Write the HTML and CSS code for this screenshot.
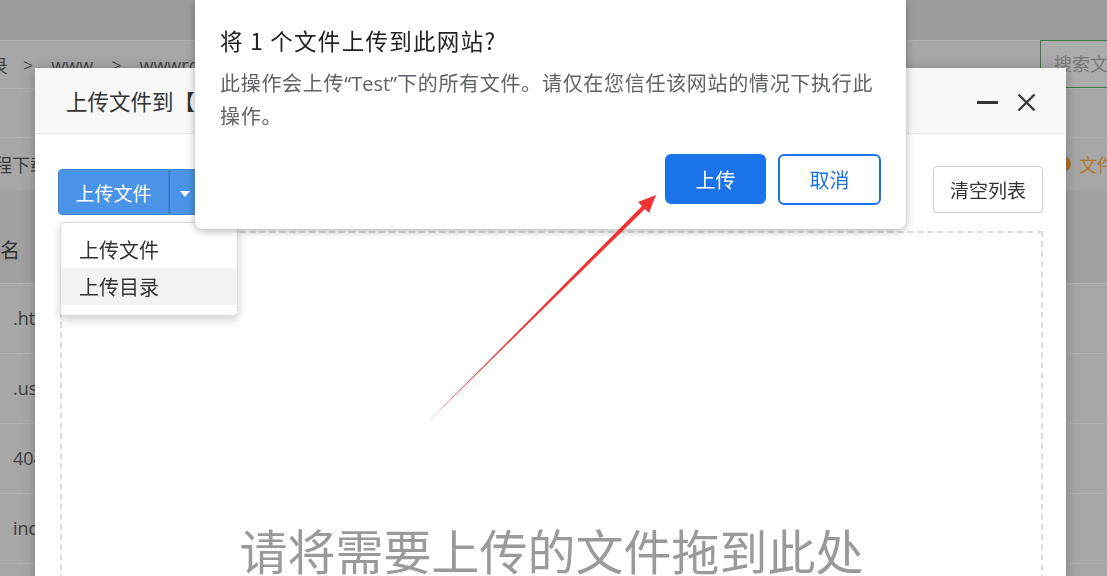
FILE: index.html
```html
<!DOCTYPE html>
<html lang="zh-CN">
<head>
    <meta charset="UTF-8">
    <meta name="viewport" content="width=device-width, initial-scale=1.0">
    <title>上传文件</title>
    <link rel="stylesheet" href="styles.css">
</head>
<body>
    <!-- file manager behind the shade -->
    <div class="page">
        <div class="topbar"></div>
        <div class="crumbs">
            <span class="crumb-cut">录</span>
            <span class="sep">&gt;</span>
            <span>www</span>
            <span class="sep">&gt;</span>
            <span>wwwroot</span>
            <div class="search">搜索文件</div>
        </div>
        <div class="band"></div>
        <div class="tools">
            <span class="tool-cut">远程下载</span>
            <span class="tip"><i class="tip-icon">!</i>文件</span>
        </div>
        <div class="thead"><span>名</span></div>
        <div class="row"><span>.htaccess</span></div>
        <div class="row"><span>.user.ini</span></div>
        <div class="row"><span>404.html</span></div>
        <div class="row"><span>index.html</span></div>
    </div>

    <!-- upload layer -->
    <div class="layer">
        <div class="layer-head">
            <span class="layer-title">上传文件到【/www/wwwroot/Test】</span>
            <div class="layer-ctrl">
                <span class="ctrl-min"></span>
                <svg class="ctrl-close" width="19" height="19" viewBox="0 0 19 19">
                    <path d="M1.5 1.5L17.5 17.5M17.5 1.5L1.5 17.5" stroke="#3c3c3c" stroke-width="2.4" fill="none"/>
                </svg>
            </div>
        </div>
        <div class="layer-body">
            <div class="upload-bar">
                <div class="btn-group">
                    <button class="btn-main">上传文件</button>
                    <button class="btn-caret"><span class="caret"></span></button>
                    <ul class="dropdown-menu">
                        <li>上传文件</li>
                        <li class="active">上传目录</li>
                    </ul>
                </div>
                <button class="btn-clear">清空列表</button>
            </div>
            <div class="dropzone">请将需要上传的文件拖到此处</div>
        </div>
    </div>

    <!-- browser confirm -->
    <div class="confirm">
        <div class="confirm-title">将 1 个文件上传到此网站?</div>
        <div class="confirm-text">此操作会上传<span class="latin">“Test”</span>下的所有文件。请仅在您信任该网站的情况下执行此<br>操作。</div>
        <div class="confirm-actions">
            <button class="btn-ok">上传</button>
            <button class="btn-cancel">取消</button>
        </div>
    </div>

    <svg class="arrow" width="1107" height="576" viewBox="0 0 1107 576">
        <polygon points="427,423 646.5,207.5 643.5,204.5" fill="#ef3333"/>
        <polygon points="656,195 649,213 638,202" fill="#ef3333"/>
    </svg>
</body>
</html>
```

FILE: styles.css
```css
body {
    margin: 0;
    width: 1107px;
    height: 576px;
    overflow: hidden;
    font-family: "Noto Sans CJK SC", "Noto Sans", sans-serif;
    background-color: #a7a7a7;
    color: #3c3c3c;
}
button {
    font-family: inherit;
    cursor: pointer;
}
.page {
    width: 1107px;
    overflow: hidden;
}
.topbar {
    height: 40px;
    background-color: #9c9c9c;
    border-bottom: 1px solid #b1b1b1;
}
.crumbs {
    display: flex;
    align-items: center;
    gap: 18px;
    height: 47px;
    font-size: 18px;
    font-family: "Open Sans", "Noto Sans CJK SC", sans-serif;
    color: #454545;
    border-bottom: 1px solid #b0b0b0;
}
.crumb-cut {
    margin-left: -10px;
    margin-right: -3px;
}
.sep {
    color: #4a4a4a;
}
.search {
    flex-shrink: 0;
    margin-left: auto;
    margin-right: -53px;
    width: 120px;
    height: 48px;
    box-sizing: border-box;
    border: 1px solid #3b7d42;
    background-color: #acacac;
    color: #7a7a7a;
    font-family: "Noto Sans CJK SC", sans-serif;
    font-size: 18px;
    line-height: 44px;
    padding-left: 13px;
    margin-top: -1px;
}
.band {
    height: 48px;
    border-bottom: 1px solid #b0b0b0;
}
.tools {
    display: flex;
    align-items: center;
    height: 52px;
    font-size: 18px;
}
.tool-cut {
    margin-left: -24px;
}
.tip {
    margin-left: auto;
    margin-right: -24px;
    display: flex;
    align-items: center;
    gap: 8px;
    color: #b5772c;
    width: 76px;
}
.tip-icon {
    display: inline-block;
    width: 16px;
    height: 16px;
    border-radius: 50%;
    background-color: #b0702a;
    color: #a7a7a7;
    font-size: 11px;
    font-style: normal;
    font-weight: bold;
    text-align: center;
    line-height: 16px;
}
.thead {
    height: 94px;
    box-sizing: border-box;
    padding-top: 44px;
    line-height: 32px;
    font-size: 20px;
    background-color: #a0a0a0;
    border-bottom: 1px solid #b2b2b2;
    color: #333;
}
.row {
    height: 70px;
    box-sizing: border-box;
    line-height: 69px;
    padding-left: 13px;
    font-size: 18px;
    font-family: "Open Sans", sans-serif;
    border-bottom: 1px solid #b2b2b2;
    color: #3e3e3e;
}

/* upload layer */
.layer {
    position: fixed;
    left: 35px;
    top: 68px;
    width: 1031px;
    height: 560px;
    background-color: #fff;
    box-shadow: 0 1px 12px rgba(0, 0, 0, 0.25);
}
.layer-head {
    display: flex;
    justify-content: space-between;
    align-items: center;
    height: 65px;
    padding: 0 30px 0 31px;
    background-color: #f8f8f8;
    border-bottom: 1px solid #e9e9e9;
}
.layer-title {
    font-size: 21.5px;
    color: #333;
    white-space: nowrap;
}
.layer-ctrl {
    display: flex;
    align-items: center;
    gap: 19px;
    margin-top: 3px;
}
.ctrl-min {
    display: block;
    width: 21px;
    height: 3px;
    background-color: #333;
}
.layer-body {
    padding: 35px 23px 0 23px;
}
.upload-bar {
    display: flex;
    justify-content: space-between;
    align-items: flex-start;
}
.btn-group {
    position: relative;
    display: flex;
}
.btn-main {
    width: 111px;
    height: 46px;
    border: 1px solid #3f86d8;
    border-radius: 4px 0 0 4px;
    background-color: #4a93e6;
    color: #fff;
    font-size: 19px;
    padding: 0;
}
.btn-caret {
    width: 32px;
    height: 46px;
    border: 1px solid #3f86d8;
    border-left-color: #3674c0;
    border-radius: 0 4px 4px 0;
    background-color: #4a93e6;
    padding: 0;
}
.caret {
    display: inline-block;
    border-top: 6px solid #fff;
    border-left: 5px solid transparent;
    border-right: 5px solid transparent;
    vertical-align: middle;
}
.dropdown-menu {
    position: absolute;
    top: 53px;
    left: 2px;
    width: 178px;
    margin: 0;
    padding: 8px 0 10px;
    list-style: none;
    background-color: #fff;
    border: 1px solid #ddd;
    border-radius: 4px;
    box-shadow: 0 4px 10px rgba(0, 0, 0, 0.18);
    box-sizing: border-box;
    z-index: 2;
}
.dropdown-menu li {
    height: 37px;
    line-height: 37px;
    padding-left: 18px;
    font-size: 20px;
    color: #333;
}
.dropdown-menu li.active {
    background-color: #f2f2f2;
}
.btn-clear {
    margin-top: -3px;
    width: 110px;
    height: 47px;
    border: 1px solid #ccc;
    border-radius: 4px;
    background-color: #fff;
    color: #333;
    font-size: 19px;
    padding: 0;
}
.dropzone {
    margin: 16px 0 0 2px;
    width: 983px;
    height: 400px;
    box-sizing: border-box;
    border: 2px dashed #ddd;
    padding-top: 286px;
    text-align: center;
    font-size: 48px;
    line-height: 60px;
    color: #9a9a9a;
}

/* browser confirm dialog */
.confirm {
    position: absolute;
    left: 195px;
    top: 0;
    width: 711px;
    height: 229px;
    box-sizing: border-box;
    padding: 26px 25px;
    background-color: #fff;
    border-radius: 0 0 8px 8px;
    box-shadow: 0 2px 8px rgba(0, 0, 0, 0.3);
    z-index: 3;
}
.confirm-title {
    font-size: 22.5px;
    letter-spacing: 1.3px;
    line-height: 28px;
    color: #202124;
}
.confirm-text {
    margin-top: 13px;
    font-size: 20px;
    letter-spacing: 0.7px;
    line-height: 32px;
    color: #5f6368;
    white-space: nowrap;
}
.latin {
    font-family: "Open Sans", sans-serif;
    letter-spacing: 0;
}
.confirm-actions {
    display: flex;
    justify-content: flex-end;
    gap: 12px;
    margin-top: 22px;
}
.btn-ok {
    width: 101px;
    height: 50px;
    border: none;
    border-radius: 6px;
    background-color: #1a73e8;
    color: #fff;
    font-size: 20px;
}
.btn-cancel {
    width: 103px;
    height: 51px;
    border: 2px solid #1a73e8;
    border-radius: 6px;
    background-color: #fff;
    color: #1a73e8;
    font-size: 20px;
}
.arrow {
    position: absolute;
    left: 0;
    top: 0;
    pointer-events: none;
    z-index: 4;
}
```
